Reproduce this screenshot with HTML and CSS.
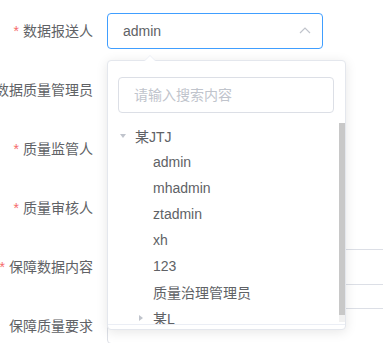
FILE: index.html
```html
<!DOCTYPE html>
<html lang="zh-CN">
<head>
  <meta charset="UTF-8" />
  <title>数据报送</title>
  <link rel="stylesheet" href="styles.css">
</head>
<body>

  <!-- 表单 -->
  <div class="form">
    <div class="form-item">
      <label class="form-label required">数据报送人</label>
      <div class="select focus">
        <span class="select-value">admin</span>
        <svg class="select-arrow" width="12" height="7" viewBox="0 0 12 7">
          <polyline points="1,6 6,1 11,6" fill="none" stroke="#c0c4cc" stroke-width="1.2" />
        </svg>
      </div>
    </div>

    <div class="form-item">
      <label class="form-label">数据质量管理员</label>
      <div class="select"></div>
    </div>

    <div class="form-item">
      <label class="form-label required">质量监管人</label>
      <div class="select"></div>
    </div>

    <div class="form-item">
      <label class="form-label required">质量审核人</label>
      <div class="select"></div>
    </div>

    <div class="form-item">
      <label class="form-label required">保障数据内容</label>
      <div class="input wide"></div>
    </div>

    <div class="form-item">
      <label class="form-label">保障质量要求</label>
      <div class="input wide"></div>
    </div>
  </div>

  <!-- 下拉树 -->
  <div class="popper">
    <div class="popper-arrow"></div>
    <div class="search">
      <input type="text" placeholder="请输入搜索内容" />
    </div>
    <div class="tree-wrap">
      <div class="tree-scroll">
        <div class="tree-node">
          <span class="caret down"></span><span>某JTJ</span>
        </div>
        <div class="tree-node level-2">
          <span class="caret leaf"></span><span>admin</span>
        </div>
        <div class="tree-node level-2">
          <span class="caret leaf"></span><span>mhadmin</span>
        </div>
        <div class="tree-node level-2">
          <span class="caret leaf"></span><span>ztadmin</span>
        </div>
        <div class="tree-node level-2">
          <span class="caret leaf"></span><span>xh</span>
        </div>
        <div class="tree-node level-2">
          <span class="caret leaf"></span><span>123</span>
        </div>
        <div class="tree-node level-2">
          <span class="caret leaf"></span><span>质量治理管理员</span>
        </div>
        <div class="tree-node level-2">
          <span class="caret right"></span><span>某L</span>
        </div>
      </div>
      <!-- 滚动条 -->
      <div class="scrollbar"><div class="scrollbar-thumb"></div></div>
    </div>
  </div>

</body>
</html>
```

FILE: styles.css
```css
body {
  margin: 0;
  width: 383px;
  height: 343px;
  overflow: hidden;
  position: relative;
  background: #fff;
  font-family: "Liberation Sans", "Noto Sans CJK SC", sans-serif;
  font-size: 14px;
  color: #606266;
}
.form {
  padding-top: 13px;
}
.form-item {
  display: flex;
  height: 36px;
  margin-bottom: 23px;
}
.form-label {
  flex: none;
  width: 93px;
  padding-right: 14px;
  display: flex;
  justify-content: flex-end;
  line-height: 36px;
  white-space: nowrap;
  color: #606266;
}
.form-label.required::before {
  content: "*";
  color: #f56c6c;
  margin-right: 4px;
}
.select, .input {
  flex: none;
  box-sizing: border-box;
  width: 216px;
  height: 36px;
  border: 1px solid #dcdfe6;
  border-radius: 4px;
  display: flex;
  align-items: center;
  padding: 0 11px 0 15px;
}
.select.focus {
  border-color: #409eff;
}
.select-value {
  flex: 1;
}
.select-arrow {
  display: block;
  margin-top: -2px;
}
.input.wide {
  width: 320px;
}

.popper {
  position: absolute;
  left: 107px;
  top: 60px;
  width: 237px;
  height: 268px;
  background: #fff;
  border: 1px solid #e4e7ed;
  border-radius: 4px;
  box-shadow: 0 2px 12px 0 rgba(0, 0, 0, 0.1);
}
.popper-arrow {
  position: absolute;
  left: 36px;
  top: -6px;
  width: 0;
  height: 0;
  border-left: 6px solid transparent;
  border-right: 6px solid transparent;
  border-bottom: 6px solid #ebeef5;
}
.popper-arrow::after {
  content: "";
  position: absolute;
  left: -5px;
  top: 1px;
  border-left: 5px solid transparent;
  border-right: 5px solid transparent;
  border-bottom: 5px solid #fff;
}
.search {
  padding: 16px 10px 0 10px;
}
.search input {
  box-sizing: border-box;
  width: 216px;
  height: 36px;
  border: 1px solid #dcdfe6;
  border-radius: 4px;
  padding: 0 15px;
  font-family: inherit;
  font-size: 14px;
  color: #606266;
  outline: none;
}
.search input::placeholder {
  color: #c0c4cc;
}
.tree-wrap {
  position: relative;
  margin-top: 10px;
  border-bottom: 1px solid #ebeef5;
}
.tree-scroll {
  height: 201px;
  overflow: hidden;
  padding-left: 3px;
}
.scrollbar {
  position: absolute;
  right: 0;
  top: 0;
  width: 6px;
  height: 199px;
  background: #f1f1f1;
}
.scrollbar-thumb {
  height: 192px;
  background: #c8c8c8;
}
.tree-node {
  display: flex;
  align-items: center;
  height: 26px;
  white-space: nowrap;
}
.tree-node.level-2 {
  padding-left: 18px;
}
.caret {
  flex: none;
  width: 24px;
  height: 26px;
  position: relative;
}
.caret.down::after {
  content: "";
  position: absolute;
  left: 9px;
  top: 11px;
  border-left: 3px solid transparent;
  border-right: 3px solid transparent;
  border-top: 4px solid #c0c4cc;
}
.caret.right::after {
  content: "";
  position: absolute;
  left: 10px;
  top: 10px;
  border-top: 3px solid transparent;
  border-bottom: 3px solid transparent;
  border-left: 4px solid #c0c4cc;
}
```
